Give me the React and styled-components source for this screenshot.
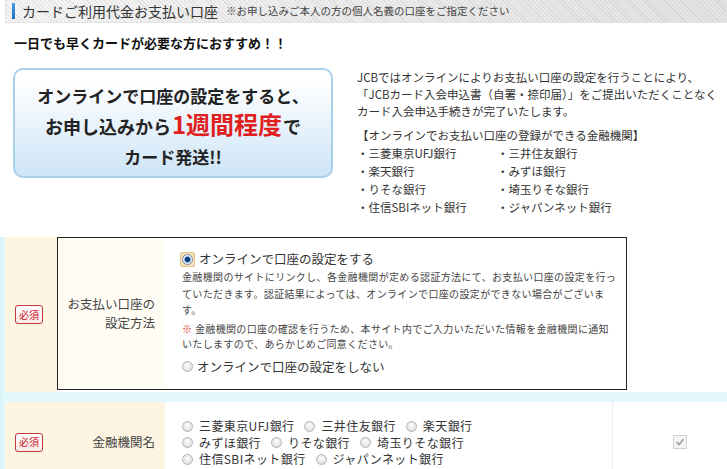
import styled, { createGlobalStyle } from "styled-components"

const GlobalStyle = createGlobalStyle`
    body {
        margin: 0;
        background: #fff;
        font-family: "Noto Sans CJK JP", "Liberation Sans", sans-serif;
        color: #333;
    }
`

const banks = [
    ["三菱東京UFJ銀行", "三井住友銀行"],
    ["楽天銀行", "みずほ銀行"],
    ["りそな銀行", "埼玉りそな銀行"],
    ["住信SBIネット銀行", "ジャパンネット銀行"],
]

const bankOptions = [
    ["三菱東京UFJ銀行", "三井住友銀行", "楽天銀行"],
    ["みずほ銀行", "りそな銀行", "埼玉りそな銀行"],
    ["住信SBIネット銀行", "ジャパンネット銀行"],
]

function App() {
    return (
        <Page>
            <GlobalStyle />
            <SectionHeader>
                <Accent />
                <Title>カードご利用代金お支払い口座</Title>
                <HeaderNote>※お申し込みご本人の方の個人名義の口座をご指定ください</HeaderNote>
            </SectionHeader>

            <Lead>一日でも早くカードが必要な方におすすめ！！</Lead>

            <Intro>
                <Promo>
                    <PromoLine>オンラインで口座の設定をすると、</PromoLine>
                    <PromoLine big>
                        お申し込みから<Accented>1週間程度</Accented>で
                    </PromoLine>
                    <PromoLine last>カード発送!!</PromoLine>
                </Promo>
                <IntroText>
                    <Paragraph>
                        JCBではオンラインによりお支払い口座の設定を行うことにより、
                        <br />
                        「JCBカード入会申込書（自署・捺印届）」をご提出いただくことなく
                        <br />
                        カード入会申込手続きが完了いたします。
                    </Paragraph>
                    <ListTitle>【オンラインでお支払い口座の登録ができる金融機関】</ListTitle>
                    <BankGrid>
                        {banks.flat().map((b) => (
                            <BankItem key={b}>・{b}</BankItem>
                        ))}
                    </BankGrid>
                </IntroText>
            </Intro>

            <FormArea>
                <Row>
                    <BadgeCell>
                        <Badge>必須</Badge>
                    </BadgeCell>
                    <FocusBox>
                        <LabelCell inset>
                            お支払い口座の
                            <br />
                            設定方法
                        </LabelCell>
                        <ValueCell>
                            <Option>
                                <Radio checked />
                                オンラインで口座の設定をする
                            </Option>
                            <Desc>
                                金融機関のサイトにリンクし、各金融機関が定める認証方法にて、お支払い口座の設定を行っ
                                <br />
                                ていただきます。認証結果によっては、オンラインで口座の設定ができない場合がございま
                                <br />
                                す。
                            </Desc>
                            <Notice>
                                <Mark>※</Mark> 金融機関の口座の確認を行うため、本サイト内でご入力いただいた情報を金融機関に通知
                                <br />
                                いたしますので、あらかじめご同意ください。
                            </Notice>
                            <Option spaced>
                                <Radio />
                                オンラインで口座の設定をしない
                            </Option>
                        </ValueCell>
                    </FocusBox>
                    <Filler />
                </Row>

                <Row short>
                    <BadgeCell>
                        <Badge>必須</Badge>
                    </BadgeCell>
                    <LabelCell>金融機関名</LabelCell>
                    <ValueCell compact>
                        {bankOptions.map((line, i) => (
                            <OptionLine key={i}>
                                {line.map((b) => (
                                    <InlineOption key={b}>
                                        <Radio />
                                        {b}
                                    </InlineOption>
                                ))}
                            </OptionLine>
                        ))}
                    </ValueCell>
                    <CheckCell>
                        <CheckBox>
                            <svg width="10" height="10" viewBox="0 0 10 10">
                                <path
                                    d="M1.5 5.2 L4 7.6 L8.6 2.2"
                                    fill="none"
                                    stroke="#a8a8a8"
                                    strokeWidth="1.8"
                                />
                            </svg>
                        </CheckBox>
                    </CheckCell>
                </Row>
            </FormArea>
        </Page>
    )
}

const Page = styled.div`
    width: 727px;
    height: 469px;
    overflow: hidden;
`

const SectionHeader = styled.div`
    margin-left: 5px;
    height: 22px;
    display: flex;
    align-items: center;
    border: 1px solid #e2e2e2;
    border-top: none;
    background: repeating-linear-gradient(
            45deg,
            rgba(0, 0, 0, 0.07) 0 1px,
            transparent 1px 3px
        ),
        linear-gradient(to right, #f6f6f6, #e4e4e4);
`

const Accent = styled.span`
    width: 3px;
    height: 16px;
    margin-left: 6px;
    background: linear-gradient(#4a9ae6, #1f6cc4);
`

const Title = styled.span`
    margin-left: 7px;
    font-size: 14px;
    line-height: 18px;
    color: #333;
`

const HeaderNote = styled.span`
    margin-left: 8px;
    font-size: 10.5px;
    line-height: 14px;
    color: #444;
`

const Lead = styled.div`
    margin: 11px 0 0 14px;
    font-size: 13px;
    line-height: 18px;
    font-weight: bold;
    color: #111;
`

const Intro = styled.div`
    display: flex;
    align-items: flex-start;
    margin: 16px 0 0 13px;
`

const Promo = styled.div`
    width: 316px;
    height: 94px;
    border: 2px solid #a9d0ea;
    border-radius: 10px;
    background: linear-gradient(#ffffff 10%, #cde5f7);
    display: flex;
    flex-direction: column;
    align-items: center;
    padding-top: 12px;
    box-sizing: content-box;
`

const PromoLine = styled.div`
    font-size: ${(p) => (p.big ? "18px" : "17px")};
    font-weight: bold;
    color: #222;
    line-height: ${(p) => (p.last ? "22px" : "28px")};
    margin-top: ${(p) => (p.last ? "6px" : "0")};
    white-space: nowrap;
`

const Accented = styled.span`
    font-size: 24px;
    color: #e0201e;
    margin: 0 1px;
`

const IntroText = styled.div`
    margin-left: 24px;
    font-size: 11.5px;
    color: #333;
`

const Paragraph = styled.p`
    margin: 1px 0 0;
    line-height: 17px;
    white-space: nowrap;
`

const ListTitle = styled.div`
    margin-top: 6px;
    line-height: 18px;
`

const BankGrid = styled.div`
    display: grid;
    grid-template-columns: 140px 140px;
    grid-auto-rows: 18px;
    line-height: 18px;
`

const BankItem = styled.div`
    white-space: nowrap;
`

const FormArea = styled.div`
    margin-top: 21px;
    padding-left: 5px;
    display: flex;
    flex-direction: column;
    gap: 10px;
    background: linear-gradient(to right, #d6f3fa, #e3f8fc 4px);
`

const Row = styled.div`
    display: flex;
    height: ${(p) => (p.short ? "80px" : "155px")};
    background: #fff;
`

const BadgeCell = styled.div`
    width: 52px;
    flex: none;
    background: #fdf5e2;
    display: flex;
    align-items: center;
    padding-left: 10px;
    box-sizing: border-box;
`

const Badge = styled.span`
    display: inline-flex;
    align-items: center;
    justify-content: center;
    width: 28px;
    height: 19px;
    box-sizing: border-box;
    border: 1px solid #c0393b;
    border-radius: 3px;
    background: linear-gradient(#fff, #fbeaea);
    color: #c8141a;
    font-size: 10px;
    line-height: 1;
`

const FocusBox = styled.div`
    width: 570px;
    height: 153px;
    flex: none;
    display: flex;
    border: 1px solid #222;
    box-sizing: border-box;
`

const LabelCell = styled.div`
    width: ${(p) => (p.inset ? "107px" : "108px")};
    flex: none;
    background: ${(p) => (p.inset ? "#fffcf4" : "#fdf5e2")};
    display: flex;
    align-items: center;
    justify-content: flex-end;
    text-align: right;
    padding-right: 10px;
    box-sizing: border-box;
    font-size: 12.5px;
    line-height: 18.4px;
    color: #444;
`

const ValueCell = styled.div`
    flex: 1;
    padding: ${(p) => (p.compact ? "16px 0 0 17px" : "12px 0 0 17px")};
    font-size: 12.5px;
    color: #333;
`

const Option = styled.div`
    display: flex;
    align-items: center;
    gap: 4px;
    line-height: 18px;
    margin-top: ${(p) => (p.spaced ? "6px" : "0")};
    margin-left: ${(p) => (p.spaced ? "0" : "-2px")};
`

const Desc = styled.div`
    margin-top: 1px;
    font-size: 10px;
    letter-spacing: 0.35px;
    line-height: 16.5px;
    white-space: nowrap;
    color: #444;
`

const Notice = styled(Desc)`
    margin-top: 2px;
    line-height: 15.5px;
`

const Mark = styled.span`
    color: #d8262a;
`

const OptionLine = styled.div`
    display: flex;
    gap: 10px;
    font-size: 12px;
    letter-spacing: 0.4px;
    line-height: 16.5px;
    white-space: nowrap;
`

const InlineOption = styled.span`
    display: inline-flex;
    align-items: center;
    gap: 6px;
`

const Radio = styled.span`
    flex: none;
    width: ${(p) => (p.checked ? "15px" : "11px")};
    height: ${(p) => (p.checked ? "15px" : "11px")};
    box-sizing: border-box;
    display: inline-flex;
    align-items: center;
    justify-content: center;
    ${(p) =>
        p.checked
            ? `
        background: #f3dfb8;
        border: 1px solid #e3c48c;
        border-radius: 2px;
        &::after {
            content: "";
            width: 11px;
            height: 11px;
            box-sizing: border-box;
            border-radius: 50%;
            border: 1px solid #7b8fa8;
            background: radial-gradient(circle, #0f3f82 0 2.2px, #5d8fcf 2.8px, #e6eef8 3.6px);
        }
    `
            : `
        border-radius: 50%;
        border: 1px solid #b4b4b4;
        background: radial-gradient(circle at 50% 40%, #fdfdfd, #d6d6d6);
    `}
`

const Filler = styled.div`
    flex: 1;
    background: #fff;
`

const CheckCell = styled.div`
    width: 115px;
    flex: none;
    border-left: 1px solid #ececec;
    display: flex;
    align-items: center;
    justify-content: center;
    padding-left: 20px;
    box-sizing: border-box;
`

const CheckBox = styled.span`
    width: 14px;
    height: 14px;
    box-sizing: border-box;
    border: 1px solid #d2d2d2;
    background: #f4f4f4;
    display: inline-flex;
    align-items: center;
    justify-content: center;
`

export default App
